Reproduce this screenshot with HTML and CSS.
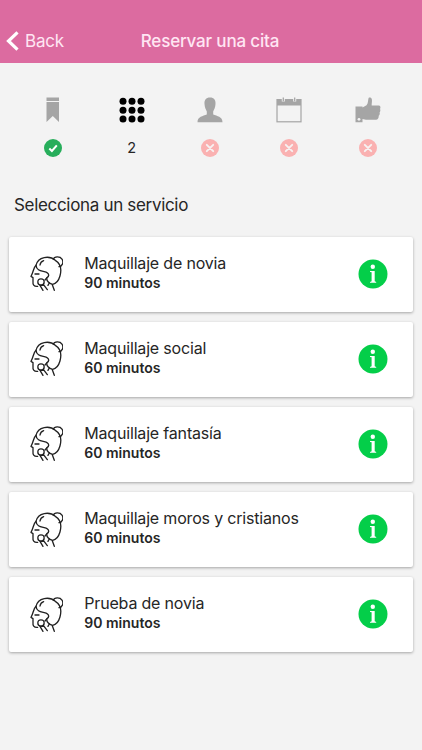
FILE: index.html
```html
<!DOCTYPE html>
<html lang="es">
<head>
<meta charset="utf-8">
<title>Reservar una cita</title>
<link rel="stylesheet" href="styles.css">
</head>
<body>
<svg class="defs" width="0" height="0">
  <symbol id="face" viewBox="90 212 100 105">
    <g fill="none" stroke="#222" stroke-width="4" stroke-linecap="round" stroke-linejoin="round">
      <path d="M160 221C163 213 180 212 186 221C192 231 187 244 177 244"/>
      <path d="M108 240C114 214 148 209 166 225C182 235 185 254 180 272C176 286 168 295 158 297C147 294 138 286 141 277C148 273 148 265 140 261C127 256 110 258 108 240Z"/>
      <path d="M108 240C100 247 100 262 93 273L99 277V288C98 297 101 304 113 303"/>
      <path d="M105 266H117M120 239C121 232 125 228 131 226M141 277L135 284M157 298L163 315M148 293L144 300"/>
      <circle cx="123" cy="290" r="9.5"/>
      <path d="M120 300L129 315M130 297L142 313M122 300L131 299"/>
    </g>
  </symbol>
  <symbol id="info" viewBox="0 0 30 30">
    <circle cx="15" cy="15" r="14.5" fill="#04ce49"/>
    <circle cx="14.8" cy="7.8" r="2.2" fill="#fff"/>
    <path d="M12 12H16.7V22.3L18.2 22.9V23.8H12V22.9L13.6 22.3V13.3L12 12.9Z" fill="#fff"/>
  </symbol>
  <symbol id="cross" viewBox="0 0 18 18">
    <circle cx="9" cy="9" r="9" fill="#fab1b1"/>
    <path d="M5.8 5.8L12.2 12.2M12.2 5.8L5.8 12.2" stroke="#f7f2f2" stroke-width="1.9" stroke-linecap="round"/>
  </symbol>
</svg>

<header class="bar">
  <a class="back"><svg width="13" height="20" viewBox="0 0 13 20"><path d="M11.5 1.3L2.5 10L11.5 18.7" fill="none" stroke="#fff" stroke-width="3.2"/></svg><span class="back-label">Back</span></a>
  <h1 class="title">Reservar una cita</h1>
</header>

<nav class="steps">
  <div class="step">
    <svg class="step-icon" viewBox="0 0 26 26"><path d="M6.5 .5H19V4H6.5ZM6.5 5H19V25L12.8 19L6.5 25Z" fill="#a5a5a5"/></svg>
    <svg class="status" viewBox="0 0 18 18"><circle cx="9" cy="9" r="9" fill="#27ae5b"/><path d="M5.3 9.5L7.9 12L12.8 6.4" fill="none" stroke="#fff" stroke-width="2"/></svg>
  </div>
  <div class="step">
    <svg class="step-icon" viewBox="0 0 26 26"><g fill="#000"><circle cx="4" cy="4.3" r="3.5"/><circle cx="13" cy="4.3" r="3.5"/><circle cx="22" cy="4.3" r="3.5"/><circle cx="4" cy="13.2" r="3.5"/><circle cx="13" cy="13.2" r="3.5"/><circle cx="22" cy="13.2" r="3.5"/><circle cx="4" cy="22.1" r="3.5"/><circle cx="13" cy="22.1" r="3.5"/><circle cx="22" cy="22.1" r="3.5"/></g></svg>
    <span class="step-number">2</span>
  </div>
  <div class="step">
    <svg class="step-icon" viewBox="0 0 26 26"><path d="M13 .5C17 .5 18.8 3 18.5 7C18.3 11 17 12.5 16.2 14.5V17.5C20 19.2 25.5 19.5 25.5 25.3H.5C.5 19.5 6 19.2 9.8 17.5V14.5C9 12.5 7.7 11 7.5 7C7.2 3 9 .5 13 .5Z" fill="#a5a5a5"/></svg>
    <svg class="status"><use href="#cross"/></svg>
  </div>
  <div class="step">
    <svg class="step-icon" viewBox="0 0 26 26"><path d="M.4 2H25.6V25.4H.4Z" fill="#a5a5a5"/><path d="M1.6 8.5H24.4V24.2H1.6Z" fill="#f3f3f3"/><path d="M7.3 .4V4.5M18.7 .4V4.5" stroke="#f3f3f3" stroke-width="3"/><path d="M7.3 .6V4.3M18.7 .6V4.3" stroke="#a5a5a5" stroke-width="1.3"/></svg>
    <svg class="status"><use href="#cross"/></svg>
  </div>
  <div class="step">
    <svg class="step-icon" viewBox="0 0 26 26"><path d="M.5 9.6H7.5V10.5L11.5 8.2C13.5 6 12.8 3 13.6 1C14.5 .2 16.5 .5 16.9 2.4C17.2 4.6 16.5 6.7 16.7 8.6H24.2C26 9.4 25.5 11.3 25 12C25.7 13 25.3 14.6 24.6 15.4C25.1 16.8 24.5 18.2 23.7 18.8C24 21 22.7 22.7 21 22.8H11L7.5 22V25.2H.5Z" fill="#a5a5a5"/><circle cx="4" cy="22.3" r="1.4" fill="#f3f3f3"/></svg>
    <svg class="status"><use href="#cross"/></svg>
  </div>
</nav>

<main>
  <h2 class="heading">Selecciona un servicio</h2>
  <div class="services">
    <article class="card"><svg class="face"><use href="#face"/></svg><div class="text"><div class="name">Maquillaje de novia</div><div class="time">90 minutos</div></div><svg class="info"><use href="#info"/></svg></article>
    <article class="card"><svg class="face"><use href="#face"/></svg><div class="text"><div class="name">Maquillaje social</div><div class="time">60 minutos</div></div><svg class="info"><use href="#info"/></svg></article>
    <article class="card"><svg class="face"><use href="#face"/></svg><div class="text"><div class="name">Maquillaje fantasía</div><div class="time">60 minutos</div></div><svg class="info"><use href="#info"/></svg></article>
    <article class="card"><svg class="face"><use href="#face"/></svg><div class="text"><div class="name">Maquillaje moros y cristianos</div><div class="time">60 minutos</div></div><svg class="info"><use href="#info"/></svg></article>
    <article class="card"><svg class="face"><use href="#face"/></svg><div class="text"><div class="name">Prueba de novia</div><div class="time">90 minutos</div></div><svg class="info"><use href="#info"/></svg></article>
  </div>
</main>
</body>
</html>
```
FILE: styles.css
```css
* { box-sizing: border-box; }
body {
  margin: 0;
  min-height: 750px;
  background: #f3f3f3;
  color: #262626;
  font-family: Inter, "Liberation Sans", sans-serif;
}
svg { display: block; flex: none; }
.defs { position: absolute; }
.bar {
  height: 63px;
  padding: 18px 6px 0;
  display: grid;
  grid-template-columns: 100px 1fr 102px;
  align-items: center;
  background: #dc6ba0;
  color: #ffe6f3;
}
.back { display: flex; align-items: center; gap: 6px; }
.back-label { font-size: 17px; line-height: 22px; letter-spacing: -0.2px; }
.title { margin: 0; text-align: center; font-size: 17px; line-height: 22px; font-weight: 500; letter-spacing: -0.17px; white-space: nowrap; }
.steps { display: grid; grid-template-columns: repeat(5, 1fr); padding: 34px 14.7px 0 13.5px; height: 122px; }
.step { display: flex; flex-direction: column; align-items: center; }
.step-icon { width: 26px; height: 26px; }
.status { width: 18px; height: 18px; margin-top: 15.5px; }
.step-number { margin-top: 15px; font-size: 14.5px; line-height: 19px; }
.heading { margin: 0; padding: 8px 14px 0; height: 51.5px; font-size: 17px; line-height: 24px; font-weight: 400; letter-spacing: -0.32px; }
.services { padding: 0 9.5px 0 8.5px; display: flex; flex-direction: column; gap: 10.2px; }
.card {
  height: 75px;
  padding: 0 24.5px 1px 21.5px;
  display: flex;
  align-items: center;
  background: #fff;
  border-radius: 2px;
  box-shadow: 0 1px 3px rgba(0, 0, 0, .32);
}
.face { width: 33.3px; height: 35px; }
.text { flex: 1; margin-left: 21px; padding-bottom: 1.6px; white-space: nowrap; }
.name { font-size: 16px; line-height: 20px; letter-spacing: -0.18px; }
.time { font-size: 14px; line-height: 20px; font-weight: 600; letter-spacing: 0; }
.info { width: 30px; height: 30px; }
```
